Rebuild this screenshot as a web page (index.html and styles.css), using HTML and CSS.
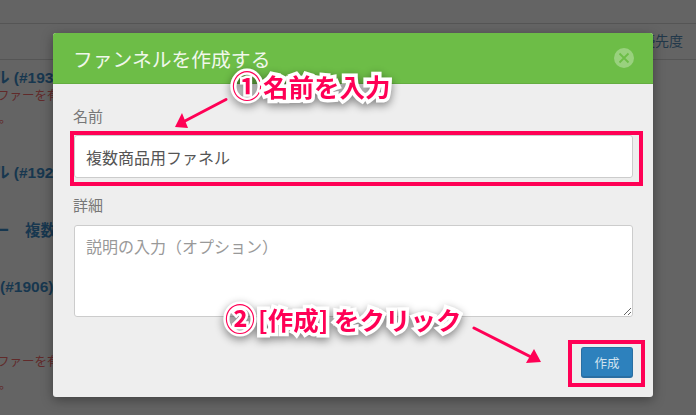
FILE: index.html
```html
<!DOCTYPE html>
<html lang="ja">
<head>
    <meta charset="UTF-8">
    <meta name="viewport" content="width=device-width, initial-scale=1.0">
    <title>ファンネルを作成する</title>
    <link rel="stylesheet" href="styles.css">
</head>
<body>
    <!-- dimmed page behind the modal -->
    <div class="page">
        <div class="topbar"></div>
        <div class="table-head"><span>優先度</span></div>
        <div class="row row-1">
            <div class="row-title">ル (#193</div>
            <div class="row-note">ファーを有</div>
            <div class="row-note row-end">。</div>
        </div>
        <div class="row row-2">
            <div class="row-title">ル (#192</div>
        </div>
        <div class="row row-3">
            <div class="row-title">ー　複数商</div>
        </div>
        <div class="row row-4">
            <div class="row-title row-title-wide">(#1906)</div>
        </div>
        <div class="row row-5">
            <div class="row-note">ファーを有</div>
            <div class="row-note row-end">。</div>
        </div>
    </div>

    <div class="modal">
        <div class="modal-header">
            <h2 class="modal-title">ファンネルを作成する</h2>
            <button class="close-button" aria-label="閉じる">
                <svg viewBox="0 0 20 20" width="20" height="20">
                    <path d="M5.500 5.500 14.500 14.500M14.500 5.500 5.500 14.500" stroke="#6dbd47" stroke-width="1.800" fill="none"/>
                </svg>
            </button>
        </div>
        <div class="modal-body">
            <label class="field-label">名前</label>
            <input class="field-input" type="text" value="複数商品用ファネル">
            <label class="field-label field-label-second">詳細</label>
            <textarea class="field-text" placeholder="説明の入力（オプション）"></textarea>
            <div class="modal-footer">
                <button class="create-button">作成</button>
            </div>
        </div>
    </div>

    <!-- annotations drawn on top of the screenshot -->
    <div class="mark mark-name"></div>
    <div class="mark mark-create"></div>
    <svg class="arrows" viewBox="0 0 696 415" width="696" height="415">
        <path d="M226 99.500 183 122" stroke="#ff0055" stroke-width="3" stroke-linecap="round" fill="none"/>
        <path d="M175 127 182 113 188 128Z" fill="#ff0055"/>
        <path d="M474 328 533 358" stroke="#ff0055" stroke-width="3" stroke-linecap="round" fill="none"/>
        <path d="M541 362 526 363 534 349Z" fill="#ff0055"/>
    </svg>
    <div class="callout callout-name"><span class="callout-num">①</span>名前を入力</div>
    <div class="callout callout-create"><span class="callout-num">②</span>[作成] をクリック</div>
</body>
</html>
```

FILE: styles.css
```css
* {
    margin: 0;
    padding: 0;
    box-sizing: border-box;
}

body {
    width: 696px;
    height: 415px;
    overflow: hidden;
    position: relative;
    background-color: #646464;
    font-family: "Noto Sans CJK JP", "Liberation Sans", sans-serif;
}

.page {
    height: 415px;
    overflow: hidden;
}

.topbar {
    height: 24px;
    border-bottom: 1px solid #555;
}

.table-head {
    height: 36px;
    border-bottom: 1px solid #555;
    display: flex;
    justify-content: flex-end;
    align-items: center;
    padding: 0 13px 3px 0;
    font-size: 14px;
    color: #22384a;
}

.row {
    overflow: hidden;
    white-space: nowrap;
}

.row-title {
    margin-left: -6px;
    font-family: "Liberation Sans", "Noto Sans CJK JP", sans-serif;
    font-size: 15.500px;
    font-weight: bold;
    line-height: 20px;
    color: #17374f;
}

.row-title-wide {
    margin-left: 0;
}

.row-note {
    margin: -3px 0 0 -3px;
    font-size: 12.500px;
    line-height: 20px;
    color: #612a2a;
}

.row-end {
    margin: 3px 0 0 -1px;
}

.row-1 {
    height: 94px;
    padding-top: 8px;
}

.row-2 {
    height: 58px;
    padding-top: 9px;
}

.row-3 {
    height: 56px;
    padding-top: 9px;
}

.row-4 {
    height: 86px;
    padding-top: 9px;
}

.modal {
    position: absolute;
    left: 53px;
    top: 33px;
    width: 600px;
    height: 364px;
    border-radius: 3px;
    overflow: hidden;
    background-color: #eee;
    box-shadow: 0 3px 12px rgba(0, 0, 0, 0.35);
}

.modal-header {
    height: 51px;
    padding: 0 19px 0 20px;
    display: flex;
    justify-content: space-between;
    align-items: center;
    background-color: #6dbd47;
    border-bottom: 1px solid #64ad41;
}

.modal-title {
    font-size: 19.800px;
    font-weight: normal;
    color: #f0f7eb;
    white-space: nowrap;
}

.close-button {
    width: 20px;
    height: 20px;
    border: none;
    border-radius: 50%;
    background-color: rgba(255, 255, 255, 0.3);
    display: flex;
}

.modal-body {
    padding: 22px 20px 0 21px;
    display: flex;
    flex-direction: column;
}

.field-label {
    margin-left: -1px;
    font-size: 15px;
    line-height: 20px;
    color: #777;
}

.field-label-second {
    margin-top: 17px;
}

.field-input {
    margin-top: 9px;
    width: 559px;
    height: 43px;
    padding: 0 11px;
    border: 1px solid #ccc;
    border-radius: 3px;
    background-color: #fff;
    font-family: inherit;
    font-size: 16px;
    color: #555;
}

.field-text {
    margin-top: 10px;
    width: 559px;
    height: 92px;
    padding: 8px 11px;
    border: 1px solid #ccc;
    border-radius: 3px;
    background-color: #fff;
    font-family: inherit;
    font-size: 16px;
}

.field-text::placeholder {
    color: #999;
}

.modal-footer {
    margin-top: 30px;
    width: 559px;
    display: flex;
    justify-content: flex-end;
}

.create-button {
    width: 52px;
    height: 31px;
    border: 1px solid #2a6fa3;
    border-bottom-width: 2px;
    border-radius: 3px;
    background-color: #2d81bd;
    font-family: inherit;
    font-size: 12.500px;
    color: #cfe2ef;
}

.mark {
    position: absolute;
    border: 4px solid #ff0055;
}

.mark-name {
    left: 70px;
    top: 131px;
    width: 573px;
    height: 55px;
}

.mark-create {
    left: 568px;
    top: 340px;
    width: 77px;
    height: 47px;
}

.arrows {
    position: absolute;
    left: 0;
    top: 0;
}

.callout {
    position: absolute;
    font-size: 25.500px;
    font-weight: bold;
    line-height: 30px;
    white-space: nowrap;
    color: #ff0055;
    -webkit-text-stroke: 7px #fff;
    paint-order: stroke fill;
    filter: drop-shadow(0 3px 4px rgba(0, 0, 0, 0.45));
}

.callout-num {
    margin-right: 1px;
    font-size: 30px;
    -webkit-text-stroke: 5px #fff;
}

.callout-create .callout-num {
    margin-right: 3px;
}

.callout-name {
    left: 232px;
    top: 69px;
}

.callout-create {
    left: 225px;
    top: 302px;
}
```
